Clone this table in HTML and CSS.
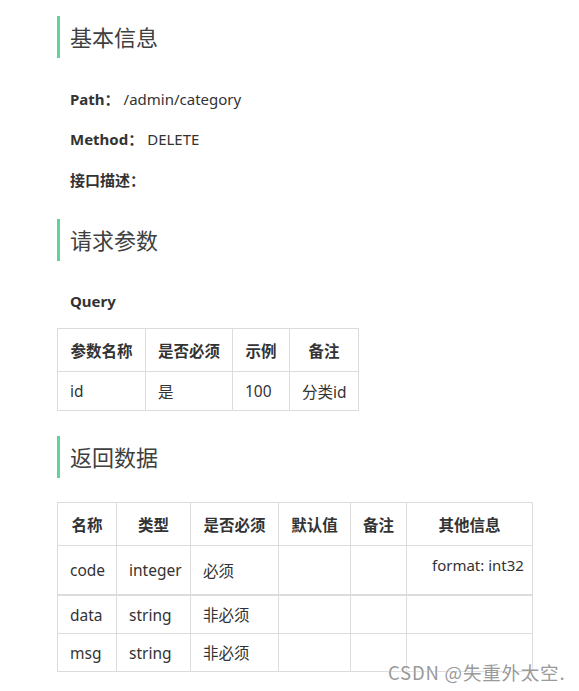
FILE: index.html
```html
<!DOCTYPE html>
<html lang="zh-CN">
<head>
<meta charset="utf-8">
<title>接口文档</title>
<link rel="stylesheet" href="styles.css">
</head>
<body>
<div class="doc">
  <h2 class="sec sec-first">基本信息</h2>
  <p class="kv kv-path"><b>Path：</b><span class="val">/admin/category</span></p>
  <p class="kv"><b>Method：</b><span class="val">DELETE</span></p>
  <p class="kv kv-desc"><b>接口描述：</b></p>

  <h2 class="sec sec-req">请求参数</h2>
  <p class="sub">Query</p>
  <table class="tbl tbl-query">
    <colgroup>
      <col class="c88"><col class="c87"><col class="c57"><col class="c69">
    </colgroup>
    <thead>
      <tr><th>参数名称</th><th>是否必须</th><th>示例</th><th>备注</th></tr>
    </thead>
    <tbody>
      <tr><td>id</td><td>是</td><td>100</td><td>分类id</td></tr>
    </tbody>
  </table>

  <h2 class="sec sec-res">返回数据</h2>
  <table class="tbl tbl-res">
    <colgroup>
      <col class="c59"><col class="c74"><col class="c88"><col class="c72"><col class="c56"><col class="c126">
    </colgroup>
    <thead>
      <tr><th>名称</th><th>类型</th><th>是否必须</th><th>默认值</th><th>备注</th><th>其他信息</th></tr>
    </thead>
    <tbody>
      <tr class="row-code"><td>code</td><td>integer</td><td>必须</td><td></td><td></td><td class="other">format: int32</td></tr>
      <tr class="row-sep"><td>data</td><td>string</td><td>非必须</td><td></td><td></td><td></td></tr>
      <tr><td>msg</td><td>string</td><td>非必须</td><td></td><td></td><td></td></tr>
    </tbody>
  </table>
</div>
<div class="watermark">CSDN @失重外太空.</div>
</body>
</html>
```

FILE: styles.css
```css
html, body {
  margin: 0;
  padding: 0;
  background: #fff;
}
body {
  font-family: "Noto Sans", "Noto Sans CJK SC", sans-serif;
  font-size: 16px;
  color: #333;
  width: 579px;
  height: 691px;
  position: relative;
  overflow: hidden;
}
.doc {
  padding: 16px 0 0 57px;
}
.sec {
  margin: 0;
  height: 42px;
  line-height: 42px;
  border-left: 3px solid #5fd39a;
  padding-left: 10px;
  font-size: 22px;
  font-weight: normal;
  color: #404040;
}
.sec-req { margin-top: 27px; }
.sec-res { margin-top: 25px; }
.kv {
  margin: 16px 0 0 13px;
  line-height: 24px;
  font-size: 15px;
}
.kv-path { margin-top: 29px; }
.kv-desc { margin-top: 17px; }
.kv b {
  font-weight: bold;
  color: #333;
}
.kv .val {
  margin-left: 4px;
}
.sub {
  margin: 28px 0 0 13px;
  line-height: 24px;
  font-weight: bold;
  font-size: 15px;
}
.tbl {
  border-collapse: collapse;
  table-layout: fixed;
  font-size: 15.5px;
}
.tbl-query { margin-top: 15px; width: 302px; }
.tbl-res { margin-top: 24px; width: 476px; }
.c88 { width: 88px; }
.c87 { width: 87px; }
.c57 { width: 57px; }
.c69 { width: 69px; }
.c59 { width: 59px; }
.c74 { width: 74px; }
.c72 { width: 72px; }
.c56 { width: 56px; }
.c126 { width: 126px; }
.tbl th, .tbl td {
  border: 1px solid #dcdcdc;
  padding: 0 12px;
  white-space: nowrap;
}
.tbl th {
  height: 42px;
  font-weight: bold;
  text-align: center;
  color: #333;
}
.tbl td {
  height: 37px;
  text-align: left;
  color: #333;
  vertical-align: middle;
}
.tbl-query td { height: 38px; }
.tbl .row-code td { height: 48px; }
.tbl .row-code td.other {
  vertical-align: top;
  height: 40px;
  padding-top: 8px;
  padding-left: 25px;
  line-height: 22px;
  font-size: 15px;
}
.tbl .row-sep td { border-top: 2px solid #dcdcdc; }
.watermark {
  position: absolute;
  left: 388px;
  top: 659px;
  font-family: "Noto Sans CJK SC", sans-serif;
  font-size: 18.5px;
  letter-spacing: 0.8px;
  color: #9a9a9a;
  text-shadow: 0 0 2px #fff, 0 0 2px #fff;
  white-space: nowrap;
}
```
